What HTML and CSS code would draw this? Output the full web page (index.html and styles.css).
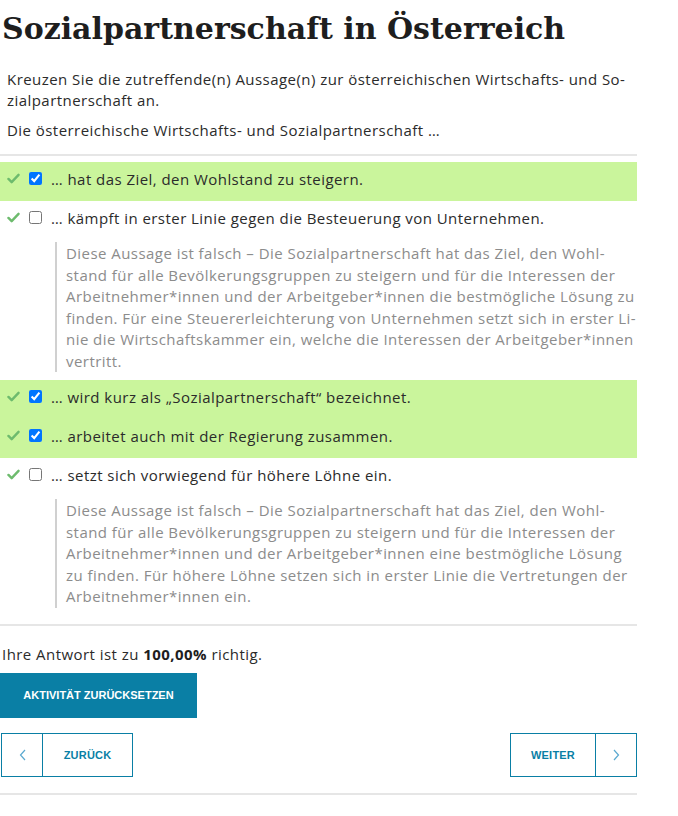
FILE: index.html
```html
<!DOCTYPE html>
<html lang="de">
<head>
<meta charset="utf-8">
<title>Sozialpartnerschaft in Österreich</title>
<link rel="stylesheet" href="styles.css">
</head>
<body>
<main class="page">
  <h1 class="title">Sozialpartnerschaft in Österreich</h1>
  <div class="intro">
    <p>Kreuzen Sie die zutreffende(n) Aussage(n) zur österreichischen Wirtschafts- und So-<br>zialpartnerschaft an.</p>
    <p>Die österreichische Wirtschafts- und Sozialpartnerschaft …</p>
  </div>
  <hr class="rule">
  <div class="answers">
    <div class="group correct">
      <div class="row">
        <svg class="tick" viewBox="0 0 14 12" width="13" height="11"><path d="M1.5 6.5 L5 10 L12.5 2" fill="none" stroke="#6dbb6d" stroke-width="2.6" stroke-linecap="round" stroke-linejoin="round"/></svg>
        <input type="checkbox" checked class="box">
        <span>… hat das Ziel, den Wohlstand zu steigern.</span>
      </div>
    </div>
    <div class="row">
      <svg class="tick" viewBox="0 0 14 12" width="13" height="11"><path d="M1.5 6.5 L5 10 L12.5 2" fill="none" stroke="#6dbb6d" stroke-width="2.6" stroke-linecap="round" stroke-linejoin="round"/></svg>
      <input type="checkbox" class="box">
      <span>… kämpft in erster Linie gegen die Besteuerung von Unternehmen.</span>
    </div>
    <p class="feedback">Diese Aussage ist falsch – Die Sozialpartnerschaft hat das Ziel, den Wohl-<br>stand für alle Bevölkerungsgruppen zu steigern und für die Interessen der<br>Arbeitnehmer*innen und der Arbeitgeber*innen die bestmögliche Lösung zu<br>finden. Für eine Steuererleichterung von Unternehmen setzt sich in erster Li-<br>nie die Wirtschaftskammer ein, welche die Interessen der Arbeitgeber*innen<br>vertritt.</p>
    <div class="group correct">
      <div class="row">
        <svg class="tick" viewBox="0 0 14 12" width="13" height="11"><path d="M1.5 6.5 L5 10 L12.5 2" fill="none" stroke="#6dbb6d" stroke-width="2.6" stroke-linecap="round" stroke-linejoin="round"/></svg>
        <input type="checkbox" checked class="box">
        <span>… wird kurz als „Sozialpartnerschaft“ bezeichnet.</span>
      </div>
      <div class="row">
        <svg class="tick" viewBox="0 0 14 12" width="13" height="11"><path d="M1.5 6.5 L5 10 L12.5 2" fill="none" stroke="#6dbb6d" stroke-width="2.6" stroke-linecap="round" stroke-linejoin="round"/></svg>
        <input type="checkbox" checked class="box">
        <span>… arbeitet auch mit der Regierung zusammen.</span>
      </div>
    </div>
    <div class="row">
      <svg class="tick" viewBox="0 0 14 12" width="13" height="11"><path d="M1.5 6.5 L5 10 L12.5 2" fill="none" stroke="#6dbb6d" stroke-width="2.6" stroke-linecap="round" stroke-linejoin="round"/></svg>
      <input type="checkbox" class="box">
      <span>… setzt sich vorwiegend für höhere Löhne ein.</span>
    </div>
    <p class="feedback">Diese Aussage ist falsch – Die Sozialpartnerschaft hat das Ziel, den Wohl-<br>stand für alle Bevölkerungsgruppen zu steigern und für die Interessen der<br>Arbeitnehmer*innen und der Arbeitgeber*innen eine bestmögliche Lösung<br>zu finden. Für höhere Löhne setzen sich in erster Linie die Vertretungen der<br>Arbeitnehmer*innen ein.</p>
  </div>
  <hr class="rule">
  <p class="score">Ihre Antwort ist zu <strong>100,00%</strong> richtig.</p>
  <button class="reset" type="button">Aktivität zurücksetzen</button>
  <nav class="nav">
    <a class="navbtn" href="#">
      <span class="chev"><svg viewBox="0 0 7 12" width="7" height="12"><polyline points="6,1 1.5,6 6,11" fill="none" stroke="#5aa9d0" stroke-width="1.2"/></svg></span>
      <span class="label back">Zurück</span>
    </a>
    <a class="navbtn" href="#">
      <span class="label next">Weiter</span>
      <span class="chev"><svg viewBox="0 0 7 12" width="7" height="12"><polyline points="1,1 5.5,6 1,11" fill="none" stroke="#5aa9d0" stroke-width="1.2"/></svg></span>
    </a>
  </nav>
  <hr class="rule">
</main>
</body>
</html>
```
FILE: styles.css
```css
html, body {
  margin: 0;
  padding: 0;
  background: #fff;
}
body {
  font-family: "Open Sans", "Liberation Sans", sans-serif;
  color: #2b2b2b;
  font-size: 15px;
  letter-spacing: 0.45px;
}
.page {
  width: 637px;
}
.title {
  font-family: "DejaVu Serif", "Liberation Serif", serif;
  font-weight: bold;
  font-size: 30px;
  line-height: 36px;
  letter-spacing: 0;
  margin: 0;
  padding: 11px 0 0 2px;
  color: #1e1e1e;
}
.intro {
  padding: 22px 0 4px 7px;
}
.intro p {
  margin: 0 0 9px;
  line-height: 21px;
}
.rule {
  border: 0;
  border-top: 2px solid #e6e6e6;
  margin: 0;
}
.answers {
  padding: 6px 0 8px;
}
.group.correct {
  background: #caf59c;
}
.row {
  display: flex;
  align-items: center;
  height: 39px;
  padding-bottom: 6px;
  box-sizing: border-box;
}
.tick {
  margin-left: 7px;
  flex: none;
}
.box {
  margin: 0 0 0 9px;
  width: 13px;
  height: 13px;
  flex: none;
}
.row span {
  margin-left: 9px;
}
.feedback {
  margin: 2px 0 8px 55px;
  padding: 1px 0 0 9px;
  border-left: 2px solid #d0d0d0;
  color: #8c8c8c;
  line-height: 21.5px;
}
.score {
  margin: 0;
  padding: 18px 0 0 2px;
  line-height: 21px;
}
.score strong {
  font-weight: bold;
  color: #1e1e1e;
}
.reset {
  display: block;
  margin-top: 8px;
  width: 197px;
  height: 45px;
  border: 0;
  background: #0a7fa5;
  color: #fff;
  font-family: "Liberation Sans", sans-serif;
  font-weight: bold;
  font-size: 11px;
  letter-spacing: 0;
  text-transform: uppercase;
  padding: 0;
}
.nav {
  display: flex;
  justify-content: space-between;
  margin: 15px 0 16px 1px;
}
.navbtn {
  display: flex;
  height: 44px;
  box-sizing: border-box;
  border: 1.5px solid #0a7fa5;
  text-decoration: none;
}
.chev {
  width: 40px;
  display: flex;
  align-items: center;
  justify-content: center;
}
.label {
  display: flex;
  align-items: center;
  justify-content: center;
  color: #0a7fa5;
  font-family: "Liberation Sans", sans-serif;
  font-weight: bold;
  font-size: 11px;
  letter-spacing: 0.2px;
  text-transform: uppercase;
}
.label.back {
  width: 89px;
  border-left: 1.5px solid #0a7fa5;
}
.label.next {
  width: 84px;
  border-right: 1.5px solid #0a7fa5;
}
```
